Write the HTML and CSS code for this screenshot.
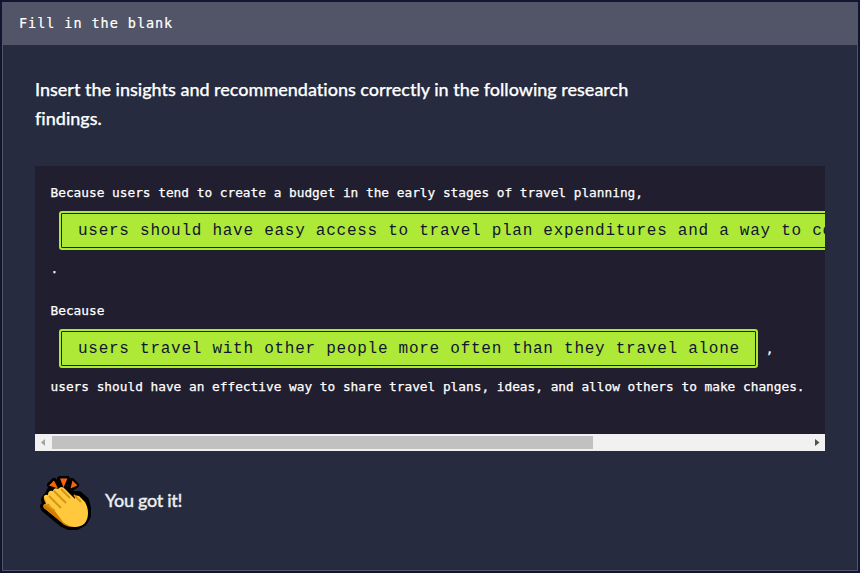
FILE: index.html
```html
<!DOCTYPE html>
<html lang="en">
<head>
<meta charset="utf-8">
<title>Fill in the blank</title>
<link rel="stylesheet" href="styles.css">
</head>
<body>
<main class="card">
  <header class="card-header">Fill in the blank</header>
  <div class="card-body">
    <p class="prompt">Insert the insights and recommendations correctly in the following research<br>findings.</p>
    <section class="code">
      <div class="code-content">
        <div class="line">Because users tend to create a budget in the early stages of travel planning,</div>
        <div class="answer-line"><span class="answer">users should have easy access to travel plan expenditures and a way to co</span></div>
        <div class="line line-dot">.</div>
        <div class="line">Because</div>
        <div class="answer-line"><span class="answer">users travel with other people more often than they travel alone</span><span class="comma">,</span></div>
        <div class="line line-last">users should have an effective way to share travel plans, ideas, and allow others to make changes.</div>
      </div>
      <div class="scrollbar">
        <svg class="arrow" viewBox="0 0 17 17"><path d="M10 5v7L6 8.500z" fill="#a3a3a3"/></svg>
        <div class="track"><div class="thumb"></div></div>
        <svg class="arrow" viewBox="0 0 17 17"><path d="M7 5v7l4.500-3.500z" fill="#505050"/></svg>
      </div>
    </section>
    <div class="result">
      <svg class="clap" viewBox="0 0 52 56">
        <g stroke="#000" stroke-width="6" stroke-linejoin="round" fill="#000">
          <path d="M10 10l4-4 5 7zM20 4h7l-3.500 7.500zM32 6l4 4-6 4z"/>
          <path d="M4 24l4-5 2-4 5-1 7-2 5 3 6 4 6 0 7 6 2 8v8l-4 7-7 4h-8l-7-3L4 34l-1-3 2-2z"/>
        </g>
        <path d="M9 10.500l5-5 4 8zM20 3.500h7.500l-4 9zM32.500 5.500l5 5-7 3z" fill="#f7630c"/>
        <path d="M4 24q-1-5 4-4 0-5 5-4 1-4 5-2 4-4 7 0l10 10q-1-5 4-3l6 6q3 5 3 11c0 9-5 14-13 14q-7 0-12-4L4 33q-2-4 2-4z" fill="#ffc83d"/>
        <path d="M4 22q1 5 6 8l9 9q3 6 12 13-6-1-9-4L4 33q-2-4 2-4h2l-4-4z" fill="#d67d00"/>
        <path d="M5 29l9 6 9 12c4 3 8 5 12 4l5-6-13-7L9 22H6l9 10z" fill="#ffc83d"/>
        <path d="M9 21l12 12M14 16l12 12M21 14l9 9M34 20l7 7M7 30l8 6" fill="none" stroke="#d69516" stroke-width="1.800"/>
      </svg>
      <span class="result-text">You got it!</span>
    </div>
  </div>
</main>
</body>
</html>
```

FILE: styles.css
```css
* { box-sizing: border-box; }
body {
  margin: 0;
  height: 573px;
  padding: 2px;
  overflow: hidden;
  background: #10162f;
}
.card {
  height: 569px;
  border: 1px solid #515567;
  background: #262b40;
  color: #fff;
}
.card-header {
  height: 42px;
  padding-left: 16px;
  background: #515567;
  font: 13.5px/40px "DejaVu Sans Mono", monospace;
  letter-spacing: 0.94px;
  -webkit-text-stroke: 0.2px #fff;
}
.card-body { padding: 30px 32px 0; }
.prompt {
  margin: 0;
  font: 500 18px/29px Lato, sans-serif;
  font-variant-ligatures: none;
  letter-spacing: -0.01px;
  -webkit-text-stroke: 0.25px #fff;
  white-space: nowrap;
}
.code {
  width: 790px;
  height: 285px;
  margin-top: 33px;
  display: flex;
  flex-direction: column;
  overflow: hidden;
  background: #211e2f;
}
.code-content {
  flex: 1;
  padding: 16px 0 0 15.5px;
  font: 12.8px/22px "DejaVu Sans Mono", monospace;
  letter-spacing: -0.01px;
  -webkit-text-stroke: 0.25px #fff;
  white-space: nowrap;
}
.line { height: 22px; }
.line-dot { padding-top: 1px; margin-bottom: 21px; }
.line-last { padding-top: 1px; }
.answer-line {
  height: 53px;
  padding: 7px 0 0 8.5px;
  display: flex;
}
.answer {
  flex: none;
  height: 39px;
  padding: 0 16px 0 17px;
  border: 2px solid #aee938;
  border-radius: 3px;
  background: #aee938;
  box-shadow: inset 0 0 0 1px #211e2f;
  color: #10162f;
  font: 16px/37px "Liberation Mono", monospace;
  letter-spacing: 0.74px;
  -webkit-text-stroke: 0;
}
.comma { margin: 9px 0 0 8px; }
.scrollbar {
  height: 17px;
  display: flex;
  align-items: center;
  background: #f1f1f1;
}
.arrow { width: 17px; height: 17px; flex: none; }
.track { flex: 1; }
.thumb { width: 541px; height: 13px; background: #c1c1c1; }
.result {
  display: flex;
  align-items: center;
  margin-top: 24px;
}
.clap { width: 52px; height: 56px; margin-left: 5px; overflow: visible; }
.result-text {
  margin: 0 0 6px 13px;
  font: 500 18px/24px Lato, sans-serif;
  letter-spacing: -0.3px;
  -webkit-text-stroke: 0.3px #eee;
  color: #eee;
}
```
